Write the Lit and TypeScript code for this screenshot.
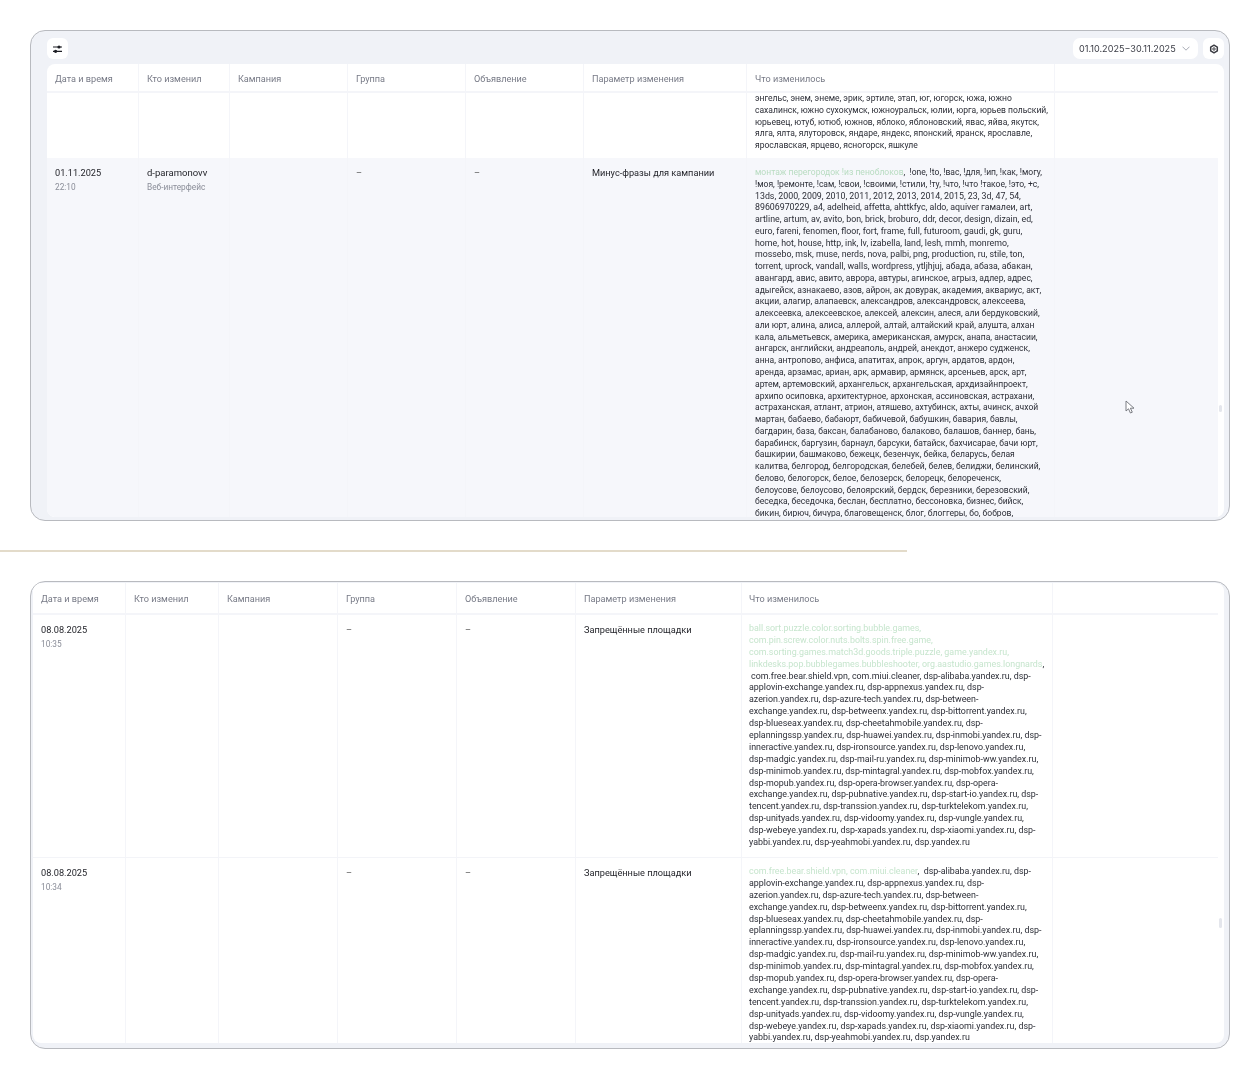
import { LitElement, html, css, nothing } from "lit";
import { customElement } from "lit/decorators.js";

const HEADERS = ["Дата и время", "Кто изменил", "Кампания", "Группа", "Объявление", "Параметр изменения", "Что изменилось", ""];

const TOP_FIRST = [
  "энгельс, энем, энеме, эрик, эртиле, этап, юг, югорск, южа, южно",
  "сахалинск, южно сухокумск, южноуральск, юлии, юрга, юрьев польский,",
  "юрьевец, ютуб, ютюб, южнов, яблоко, яблоновский, явас, яйва, якутск,",
  "ялга, ялта, ялуторовск, яндаре, яндекс, японский, яранск, ярославле,",
  "ярославская, ярцево, ясногорск, яшкуле",
];

const TOP_SECOND = [
  "!моя, !ремонте, !сам, !свои, !своими, !стили, !ту, !что, !что !такое, !это, +с,",
  "13ds, 2000, 2009, 2010, 2011, 2012, 2013, 2014, 2015, 23, 3d, 47, 54,",
  "89606970229, a4, adelheid, affetta, ahttkfyc, aldo, aquiver гамалеи, art,",
  "artline, artum, av, avito, bon, brick, broburo, ddr, decor, design, dizain, ed,",
  "euro, fareni, fenomen, floor, fort, frame, full, futuroom, gaudi, gk, guru,",
  "home, hot, house, http, ink, lv, izabella, land, lesh, mmh, monremo,",
  "mossebo, msk, muse, nerds, nova, palbi, png, production, ru, stile, ton,",
  "torrent, uprock, vandall, walls, wordpress, ytljhjuj, абада, абаза, абакан,",
  "авангард, авис, авито, аврора, автуры, агинское, агрыз, адлер, адрес,",
  "адыгейск, азнакаево, азов, айрон, ак довурак, академия, аквариус, акт,",
  "акции, алагир, алапаевск, александров, александровск, алексеева,",
  "алексеевка, алексеевское, алексей, алексин, алеся, али бердуковский,",
  "али юрт, алина, алиса, аллерой, алтай, алтайский край, алушта, алхан",
  "кала, альметьевск, америка, американская, амурск, анапа, анастасии,",
  "ангарск, английски, андреаполь, андрей, анекдот, анжеро судженск,",
  "анна, антропово, анфиса, апатитах, апрок, аргун, ардатов, ардон,",
  "аренда, арзамас, ариан, арк, армавир, армянск, арсеньев, арск, арт,",
  "артем, артемовский, архангельск, архангельская, архдизайнпроект,",
  "архипо осиповка, архитектурное, архонская, ассиновская, астрахани,",
  "астраханская, атлант, атрион, атяшево, ахтубинск, ахты, ачинск, ачхой",
  "мартан, бабаево, бабаюрт, бабичевой, бабушкин, бавария, бавлы,",
  "багдарин, база, баксан, балабаново, балаково, балашов, баннер, бань,",
  "барабинск, баргузин, барнаул, барсуки, батайск, бахчисарае, бачи юрт,",
  "башкирии, башмаково, бежецк, безенчук, бейка, беларусь, белая",
  "калитва, белгород, белгородская, белебей, белев, белиджи, белинский,",
  "белово, белогорск, белое, белозерск, белорецк, белореченск,",
  "белоусове, белоусово, белоярский, бердск, березники, березовский,",
  "беседка, беседочка, беслан, бесплатно, бессоновка, бизнес, бийск,",
  "бикин, бирюч, бичура, благовещенск, блог, блоггеры, бо, бобров,",
];

const DSP = [
  "applovin-exchange.yandex.ru, dsp-appnexus.yandex.ru, dsp-",
  "azerion.yandex.ru, dsp-azure-tech.yandex.ru, dsp-between-",
  "exchange.yandex.ru, dsp-betweenx.yandex.ru, dsp-bittorrent.yandex.ru,",
  "dsp-blueseax.yandex.ru, dsp-cheetahmobile.yandex.ru, dsp-",
  "eplanningssp.yandex.ru, dsp-huawei.yandex.ru, dsp-inmobi.yandex.ru, dsp-",
  "inneractive.yandex.ru, dsp-ironsource.yandex.ru, dsp-lenovo.yandex.ru,",
  "dsp-madgic.yandex.ru, dsp-mail-ru.yandex.ru, dsp-minimob-ww.yandex.ru,",
  "dsp-minimob.yandex.ru, dsp-mintagral.yandex.ru, dsp-mobfox.yandex.ru,",
  "dsp-mopub.yandex.ru, dsp-opera-browser.yandex.ru, dsp-opera-",
  "exchange.yandex.ru, dsp-pubnative.yandex.ru, dsp-start-io.yandex.ru, dsp-",
  "tencent.yandex.ru, dsp-transsion.yandex.ru, dsp-turktelekom.yandex.ru,",
  "dsp-unityads.yandex.ru, dsp-vidoomy.yandex.ru, dsp-vungle.yandex.ru,",
  "dsp-webeye.yandex.ru, dsp-xapads.yandex.ru, dsp-xiaomi.yandex.ru, dsp-",
  "yabbi.yandex.ru, dsp-yeahmobi.yandex.ru, dsp.yandex.ru",
];

/* Latin-heavy lines run a touch wider in the original face than Cyrillic ones. */
const isLatin = (l: string) => (l.match(/[а-яё]/gi) ?? []).length < l.length * 0.25;
const lines = (items: string[]) =>
  items.map((l) => html`<span class="line ${isLatin(l) ? "lat" : ""}">${l}</span>`);

@customElement("app-root")
export class AppRoot extends LitElement {
  static styles = css`
    :host {
      display: block;
      width: 1260px;
      height: 1079px;
      overflow: hidden;
      background: #fff;
      box-sizing: border-box;
      padding-top: 30px;
      font-family: "Roboto", "Noto Sans", sans-serif;
      color: #24252b;
      filter: blur(0.4px);
    }
    .card {
      box-sizing: border-box;
      width: 1200px;
      margin-left: 30px;
      border: 1px solid #b8babf;
      border-radius: 15px;
      background: #f0f2f7;
      display: flex;
      flex-direction: column;
      overflow: hidden;
    }
    .card.top { height: 491px; padding: 7px 5px 3px 16px; }
    .card.bottom { height: 468px; padding: 1px 5px 5px 2px; }
    .divider { width: 907px; height: 2px; margin: 29px 0 29px; background: #e3dbca; }
    .toolbar { display: flex; align-items: center; height: 21px; margin-bottom: 5px; flex: none; }
    .btn {
      width: 21px;
      height: 21px;
      background: #fff;
      border-radius: 6px;
      display: flex;
      align-items: center;
      justify-content: center;
      flex: none;
    }
    .spacer { flex: 1; }
    .date {
      width: 125px;
      height: 21px;
      box-sizing: border-box;
      padding: 0 8px 0 6px;
      margin-right: 5px;
      background: #fff;
      border-radius: 7px;
      display: flex;
      align-items: center;
      justify-content: space-between;
      font-family: "Inter", sans-serif;
      font-size: 9.1px;
      color: #3a3c45;
      white-space: nowrap;
    }
    .table {
      flex: 1;
      min-height: 0;
      background: #fff;
      border-radius: 8px;
      padding-right: 6px;
      overflow: hidden;
      position: relative;
    }
    .top .row, .top .head { grid-template-columns: 92px 91px 118px 118px 118px 163px 308px 163px; }
    .bottom .row, .bottom .head { grid-template-columns: 93px 93px 119px 119px 119px 166px 311px 165px; }
    .head {
      display: grid;
      height: 27px;
      border-bottom: 2px solid #f4f5f9;
      box-sizing: content-box;
      align-items: stretch;
      font-size: 9.15px;
      color: #777a86;
    }
    .bottom .head { height: 30px; }
    .head div {
      display: flex;
      align-items: center;
      padding-left: 8px;
      border-right: 1px solid #f4f5f9;
      white-space: nowrap;
    }
    .top .head div { padding-top: 2px; }
    .bottom .head div { padding-top: 1px; }
    .bottom .head div:nth-child(7) { padding-left: 7px; }
    .head div:last-child { border-right: none; }
    .row { display: grid; overflow: hidden; position: relative; }
    .top .row.r1 { height: 65px; }
    .top .row.r2 { height: 360px; background: #f6f7fb; }
    .bottom .row.r1 { height: 243px; border-bottom: 1px solid #f3f4f8; box-sizing: border-box; }
    .bottom .row.r2 { height: 186px; }
    .cell {
      box-sizing: border-box;
      padding: 9px 0 0 8px;
      border-right: 1px solid #f4f5f9;
      font-size: 9.2px;
      line-height: 12px;
      min-width: 0;
      white-space: nowrap;
    }
    .cell:last-child { border-right: none; }
    .bottom .cell { padding-top: 9px; }
    .who { font-size: 9.5px; }
    .sub { display: block; margin-top: 3px; font-size: 8.3px; line-height: 11px; color: #8a8d98; }
    .dash { color: #555; }
    .text { font-size: 8.55px; line-height: 11.77px; padding-top: 9px; color: #2c2e37; }
    .lat { font-size: 8.8px; }
    .bottom .text { font-size: 8.9px; line-height: 11.9px; padding-top: 8px; padding-left: 7px; }
    .text.clip {
      padding-top: 0;
      padding-bottom: 14px;
      display: flex;
      flex-direction: column;
      justify-content: flex-end;
    }
    .line { display: block; height: 11.77px; }
    .bottom .line { height: 11.9px; font-size: 8.9px; }
    .add { color: #b8dcc1; }
    .bottom .add { color: #c6e5cd; }
    .indent { padding-left: 2px; }
    .thumb {
      position: absolute;
      right: 2px;
      width: 3px;
      border-radius: 2px;
      background: #e4e6ec;
    }
    .top .thumb { top: 341px; height: 7px; }
    .bottom .thumb { top: 335px; height: 10px; }
    .cursor { position: absolute; left: 1078px; top: 336px; }
    svg { display: block; }
  `;

  private head() {
    return html`<div class="head">${HEADERS.map((h) => html`<div>${h}</div>`)}</div>`;
  }

  private row(
    cls: string,
    date: string,
    time: string,
    who: string,
    via: string,
    dash: boolean,
    param: string,
    body: unknown,
    clip = false
  ) {
    return html`<div class="row ${cls}">
      <div class="cell">${date}${time ? html`<span class="sub">${time}</span>` : nothing}</div>
      <div class="cell who">${who}${via ? html`<span class="sub">${via}</span>` : nothing}</div>
      <div class="cell"></div>
      <div class="cell dash">${dash ? "–" : nothing}</div>
      <div class="cell dash">${dash ? "–" : nothing}</div>
      <div class="cell">${param}</div>
      <div class="cell text ${clip ? "clip" : ""}">${body}</div>
      <div class="cell"></div>
    </div>`;
  }

  render() {
    return html`
      <section class="card top">
        <div class="toolbar">
          <div class="btn">
            <svg width="11" height="10" viewBox="0 0 11 10" fill="none" stroke="#1d1e24" stroke-width="1.2">
              <path d="M1 3h9M1 7.3h9" />
              <circle cx="7" cy="3" r="1.6" fill="#1d1e24" stroke="none" />
              <circle cx="3.6" cy="7.3" r="1.6" fill="#1d1e24" stroke="none" />
            </svg>
          </div>
          <div class="spacer"></div>
          <div class="date">
            <span>01.10.2025−30.11.2025</span>
            <svg width="8" height="5" viewBox="0 0 8 5" fill="none" stroke="#a9acb6" stroke-width="1">
              <path d="M.5.7 4 4.2 7.5.7" />
            </svg>
          </div>
          <div class="btn">
            <svg width="10" height="10" viewBox="0 0 10 10" fill="none" stroke="#3a3b42">
              <path d="M5 1.2 8.3 3.1v3.8L5 8.8 1.7 6.9V3.1Z" stroke-width="1.5" stroke-linejoin="round" />
              <circle cx="5" cy="5" r="1.2" stroke-width="1" />
            </svg>
          </div>
        </div>
        <div class="table">
          ${this.head()}
          ${this.row("r1", "", "", "", "", false, "", lines(TOP_FIRST), true)}
          ${this.row(
            "r2",
            "01.11.2025",
            "22:10",
            "d-paramonovv",
            "Веб-интерфейс",
            true,
            "Минус-фразы для кампании",
            html`<span class="line"><span class="add">монтаж перегородок !из пеноблоков</span>,&nbsp; !one, !to, !вас, !для, !ип, !как, !могу,</span>${lines(TOP_SECOND)}`
          )}
          <div class="thumb"></div>
          <svg class="cursor" width="10" height="14" viewBox="0 0 10 14" fill="#fff" stroke="#6d6f76" stroke-width="0.9">
            <path d="M1 1v10l2.5-2.2L5.4 13l1.9-.8-1.9-4H9Z" stroke-linejoin="round" />
          </svg>
        </div>
      </section>
      <div class="divider"></div>
      <section class="card bottom">
        <div class="table">
          ${this.head()}
          ${this.row(
            "r1",
            "08.08.2025",
            "10:35",
            "",
            "",
            true,
            "Запрещённые площадки",
            html`<span class="line add">ball.sort.puzzle.color.sorting.bubble.games,</span>
              <span class="line add">com.pin.screw.color.nuts.bolts.spin.free.game,</span>
              <span class="line add">com.sorting.games.match3d.goods.triple.puzzle, game.yandex.ru,</span>
              <span class="line"><span class="add">linkdesks.pop.bubblegames.bubbleshooter, org.aastudio.games.longnards</span>,</span>
              <span class="line indent">com.free.bear.shield.vpn, com.miui.cleaner, dsp-alibaba.yandex.ru, dsp-</span>
              ${lines(DSP)}`
          )}
          ${this.row(
            "r2",
            "08.08.2025",
            "10:34",
            "",
            "",
            true,
            "Запрещённые площадки",
            html`<span class="line"><span class="add">com.free.bear.shield.vpn, com.miui.cleaner</span>,&nbsp; dsp-alibaba.yandex.ru, dsp-</span>${lines(DSP)}`
          )}
          <div class="thumb"></div>
        </div>
      </section>
    `;
  }
}
